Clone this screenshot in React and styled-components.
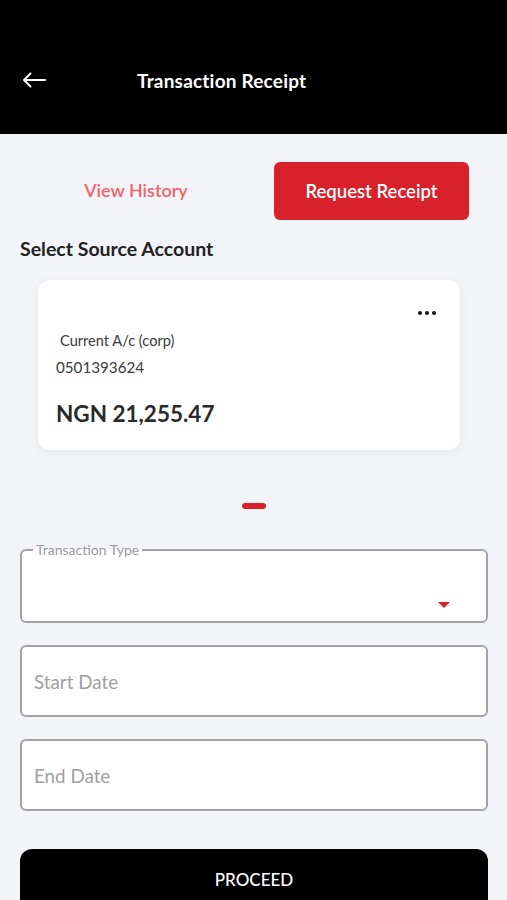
import React from "react";
import styled, { createGlobalStyle } from "styled-components";

const GlobalStyle = createGlobalStyle`
  body {
    margin: 0;
    background: #f2f4f7;
    font-family: "Lato", "Noto Sans", sans-serif;
  }
`;

const App = () => {
  return (
    <Page>
      <GlobalStyle />
      <Header>
        <BackButton aria-label="Back">
          <svg width="24" height="16" viewBox="0 0 24 16" fill="none">
            <path d="M23 8H2M8.5 1.5L2 8l6.5 6.5" stroke="#fff" strokeWidth="2" strokeLinecap="round" strokeLinejoin="round" />
          </svg>
        </BackButton>
        <Title>Transaction Receipt</Title>
      </Header>

      <Content>
        <Tabs>
          <TabLink>View History</TabLink>
          <TabButton>Request Receipt</TabButton>
        </Tabs>

        <SectionTitle>Select Source Account</SectionTitle>

        <Card>
          <MoreDots>
            <span />
            <span />
            <span />
          </MoreDots>
          <AccountType>Current A/c (corp)</AccountType>
          <AccountNumber>0501393624</AccountNumber>
          <Balance>NGN 21,255.47</Balance>
        </Card>

        <Indicator />

        <Form>
          <SelectField>
            <Legend>Transaction Type</Legend>
            <Caret />
          </SelectField>
          <InputField>
            <Placeholder>Start Date</Placeholder>
          </InputField>
          <InputField>
            <Placeholder>End Date</Placeholder>
          </InputField>
        </Form>

        <Proceed>PROCEED</Proceed>
      </Content>
    </Page>
  );
};

export default App;

const Page = styled.div`
  min-height: 900px;
  overflow: hidden;
`;

const Header = styled.header`
  height: 134px;
  box-sizing: border-box;
  background: #000;
  display: flex;
  align-items: center;
  padding: 26px 22px 0;
`;

const BackButton = styled.button`
  background: none;
  border: 0;
  padding: 0;
  display: flex;
  margin-top: -1px;
`;

const Title = styled.h1`
  margin: 0 0 0 91px;
  color: #fff;
  font-size: 19px;
  font-weight: 700;
  letter-spacing: 0.2px;
`;

const Content = styled.main`
  padding: 28px 19px 0 20px;
`;

const Tabs = styled.div`
  display: flex;
  align-items: center;
  justify-content: space-between;
`;

const TabLink = styled.button`
  background: none;
  border: 0;
  width: 232px;
  font-family: inherit;
  font-size: 18px;
  font-weight: 600;
  color: #f0636a;
  text-align: center;
  padding: 0 0 2px;
`;

const TabButton = styled.button`
  width: 195px;
  height: 58px;
  margin-right: 19px;
  background: #d9212b;
  border: 0;
  border-radius: 6px;
  color: #fff;
  font-family: inherit;
  font-size: 18.5px;
  font-weight: 600;
`;

const SectionTitle = styled.h2`
  margin: 17px 0 20px;
  font-size: 19.5px;
  font-weight: 700;
  color: #222;
`;

const Card = styled.div`
  position: relative;
  margin: 0 28px 0 18px;
  height: 170px;
  box-sizing: border-box;
  background: #fff;
  border-radius: 12px;
  box-shadow: 0 2px 10px rgba(0, 0, 0, 0.06);
  padding: 52px 18px 0 18px;
`;

const MoreDots = styled.div`
  position: absolute;
  top: 31px;
  right: 24px;
  display: flex;
  gap: 3px;

  span {
    width: 4px;
    height: 4px;
    border-radius: 50%;
    background: #111;
  }
`;

const AccountType = styled.div`
  font-size: 14.6px;
  color: #3a3a3a;
  padding-left: 4px;
`;

const AccountNumber = styled.div`
  margin-top: 9px;
  font-size: 15.2px;
  color: #3a3a3a;
`;

const Balance = styled.div`
  margin-top: 24px;
  font-size: 22.5px;
  font-weight: 700;
  color: #2a2a2a;
`;

const Indicator = styled.div`
  width: 24px;
  height: 6px;
  border-radius: 3px;
  background: #d9212b;
  margin: 53px auto 0;
`;

const Form = styled.div`
  margin-top: 34px;
  display: flex;
  flex-direction: column;
  gap: 22px;
`;

const SelectField = styled.fieldset`
  position: relative;
  margin: 0;
  height: 80px;
  box-sizing: border-box;
  border: 2px solid #a3a3a3;
  border-radius: 6px;
  background: #fff;
  padding: 0 12px;
`;

const Legend = styled.legend`
  font-size: 14px;
  line-height: 14px;
  color: #9a9a9a;
  padding: 0 3px;
  margin-left: -1px;
`;

const Caret = styled.span`
  position: absolute;
  right: 36px;
  top: 45px;
  width: 0;
  height: 0;
  border-left: 6px solid transparent;
  border-right: 6px solid transparent;
  border-top: 6px solid #d9212b;
`;

const InputField = styled.div`
  height: 72px;
  box-sizing: border-box;
  border: 2px solid #a3a3a3;
  border-radius: 6px;
  background: #fff;
  padding: 0 12px;
  display: flex;
  align-items: center;
`;

const Placeholder = styled.span`
  font-size: 18.8px;
  color: #a0a0a0;
`;

const Proceed = styled.button`
  margin-top: 38px;
  width: 100%;
  height: 64px;
  background: #000;
  color: #fff;
  border: 0;
  border-radius: 12px;
  font-family: inherit;
  font-size: 17px;
  font-weight: 500;
  display: flex;
  justify-content: center;
  padding-top: 20px;
`;
